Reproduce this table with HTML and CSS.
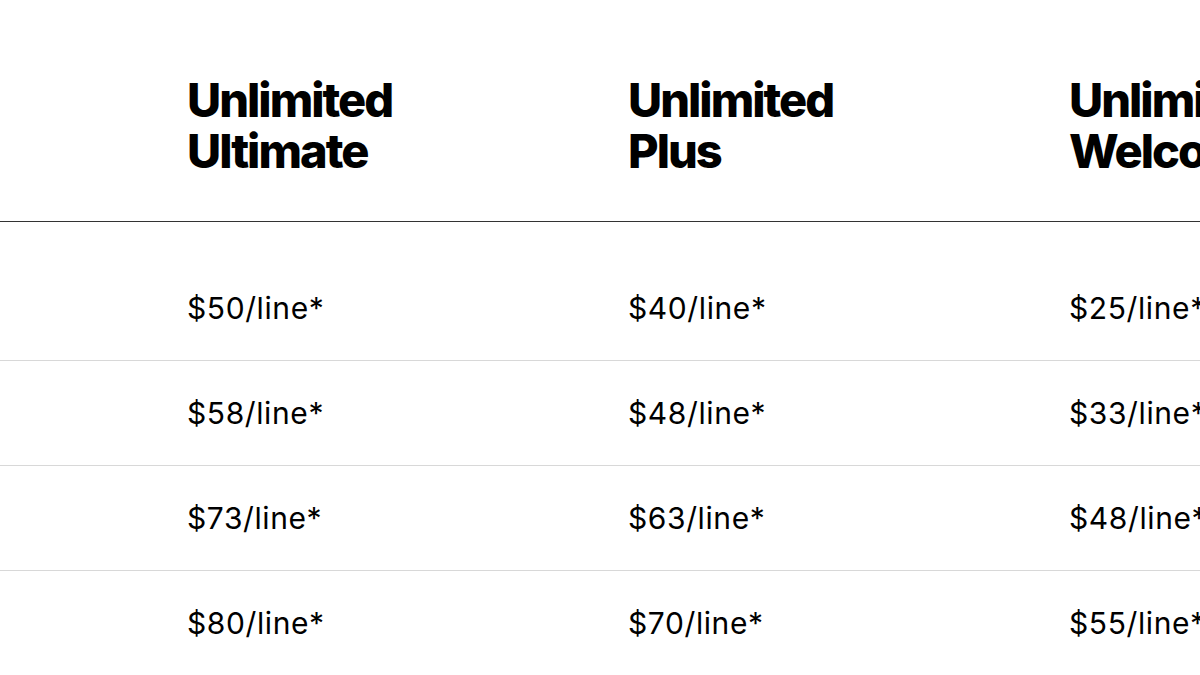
FILE: index.html
```html
<!DOCTYPE html>
<html lang="en">
<head>
<meta charset="utf-8">
<title>Unlimited plans</title>
<link rel="stylesheet" href="styles.css">
</head>
<body>
<div class="compare">
  <div class="row head">
    <div class="cell label"></div>
    <div class="cell plan">Unlimited<br>Ultimate</div>
    <div class="cell plan">Unlimited<br>Plus</div>
    <div class="cell plan">Unlimited<br>Welcome</div>
  </div>
  <div class="body">
    <div class="row price-row">
      <div class="cell label"></div>
      <div class="cell price">$50/line*</div>
      <div class="cell price">$40/line*</div>
      <div class="cell price">$25/line*</div>
    </div>
    <div class="row price-row">
      <div class="cell label"></div>
      <div class="cell price">$58/line*</div>
      <div class="cell price">$48/line*</div>
      <div class="cell price">$33/line*</div>
    </div>
    <div class="row price-row">
      <div class="cell label"></div>
      <div class="cell price">$73/line*</div>
      <div class="cell price">$63/line*</div>
      <div class="cell price">$48/line*</div>
    </div>
    <div class="row price-row">
      <div class="cell label"></div>
      <div class="cell price">$80/line*</div>
      <div class="cell price">$70/line*</div>
      <div class="cell price">$55/line*</div>
    </div>
  </div>
</div>
</body>
</html>
```

FILE: styles.css
```css
html, body {
  margin: 0;
  padding: 0;
  background: #fff;
}
body {
  width: 1200px;
  height: 675px;
  overflow: hidden;
  font-family: Inter, "Liberation Sans", Arial, sans-serif;
  color: #000;
}
.compare {
  width: 1200px;
  overflow: hidden;
}
.row {
  display: grid;
  grid-template-columns: 187px 441px 441px 441px;
  width: 1510px;
}
.head {
  padding: 74px 0 45px;
  border-bottom: 1px solid #333;
}
.plan {
  font-size: 47px;
  font-weight: 800;
  line-height: 51px;
  letter-spacing: -2px;
  white-space: nowrap;
}
.body {
  padding-top: 34px;
}
.price-row {
  padding: 34px 0;
}
.price-row + .price-row {
  border-top: 1px solid #d8d8d8;
}
.price {
  font-size: 30px;
  font-weight: 400;
  line-height: 36px;
  letter-spacing: 0.6px;
  white-space: nowrap;
}
```
